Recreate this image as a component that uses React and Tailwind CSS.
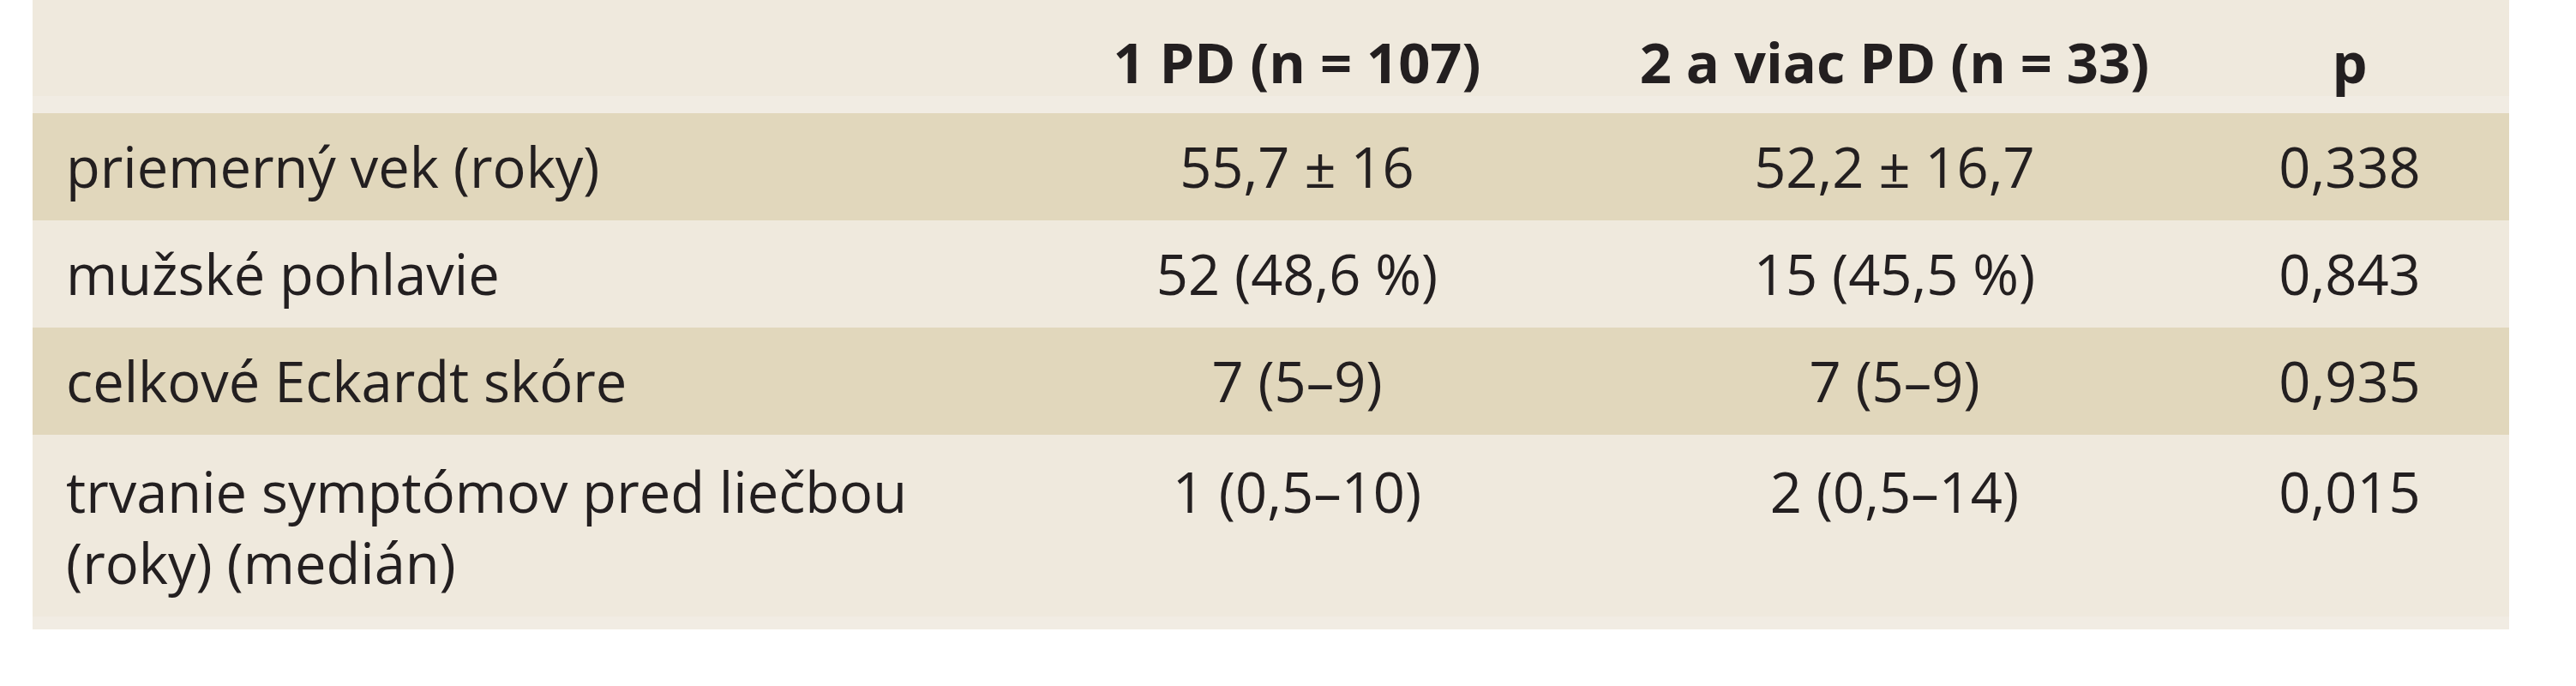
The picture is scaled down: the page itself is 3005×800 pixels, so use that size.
import React from "react";

const rows = [
  { label: "priemerný vek (roky)", a: "55,7 ± 16", b: "52,2 ± 16,7", p: "0,338", dark: true },
  { label: "mužské pohlavie", a: "52 (48,6 %)", b: "15 (45,5 %)", p: "0,843" },
  { label: "celkové Eckardt skóre", a: "7 (5–9)", b: "7 (5–9)", p: "0,935", dark: true },
];

const grid = "grid grid-cols-[1123px_704px_690px_372px]";

const App = () => {
  return (
    <div className="w-[3005px] h-[800px] bg-white pl-[38px] font-['Open_Sans',sans-serif] text-[65px] leading-[83px] text-[#231f20]">
      <div className="w-[2889px] bg-[#efe9dd]">
        {/* header */}
        <div className={`${grid} h-[132px] items-center pt-[31px] font-bold border-b-[20px] border-[#f1ece3]`}>
          <div />
          <div className="text-center">1 PD (n = 107)</div>
          <div className="text-center">2 a viac PD (n = 33)</div>
          <div className="text-center">p</div>
        </div>

        {rows.map((r) => (
          <div
            key={r.label}
            className={`${grid} h-[125px] items-center ${r.dark ? "bg-[#e1d7bc]" : "bg-[#efe9dd]"}`}
          >
            <div className="pl-[39px] whitespace-nowrap">{r.label}</div>
            <div className="text-center">{r.a}</div>
            <div className="text-center">{r.b}</div>
            <div className="text-center">{r.p}</div>
          </div>
        ))}

        <div className={`${grid} h-[227px] items-start pt-[25px] border-b-[15px] border-[#f1ece3]`}>
          <div className="pl-[39px]">
            trvanie symptómov pred liečbou
            <br />
            (roky) (medián)
          </div>
          <div className="text-center">1 (0,5–10)</div>
          <div className="text-center">2 (0,5–14)</div>
          <div className="text-center">0,015</div>
        </div>
      </div>
    </div>
  );
};

export default App;
